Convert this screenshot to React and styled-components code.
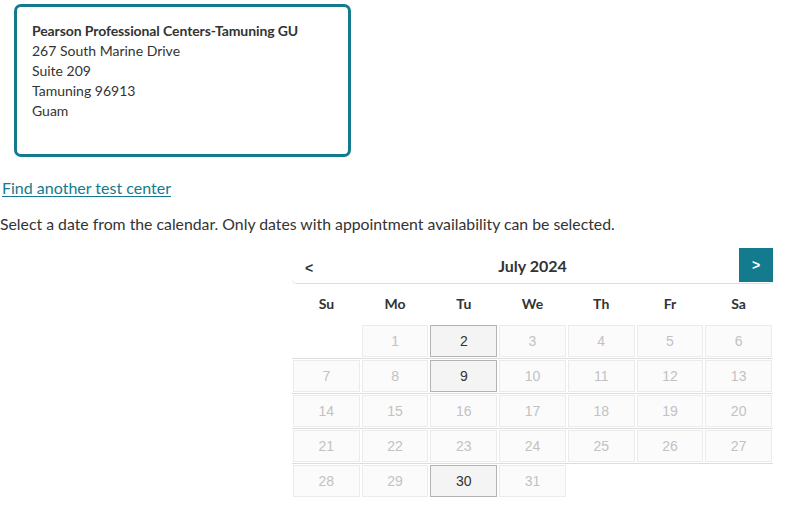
import React from 'react'
import styled, { createGlobalStyle } from 'styled-components'

const GlobalStyle = createGlobalStyle`
  body {
    margin: 0;
    background: #fff;
    color: #333;
    font-family: Lato, "Open Sans", sans-serif;
  }
`

const Page = styled.div`
  display: flex;
  flex-direction: column;
  align-items: flex-start;
  padding-top: 4px;
`

const CenterCard = styled.div`
  box-sizing: border-box;
  width: 337px;
  height: 153px;
  margin-left: 14px;
  padding: 14px 15px;
  border: 3px solid #137b8d;
  border-radius: 7px;
  font-size: 14px;
  line-height: 20px;
`

const CenterName = styled.div`
  font-weight: 700;
  letter-spacing: -0.1px;
`

const FindLink = styled.a`
  margin: 21px 0 0 2px;
  font-size: 16px;
  line-height: 20px;
  color: #137b8d;
  text-decoration: underline;
  text-underline-offset: 2px;
  cursor: pointer;
`

const Hint = styled.p`
  margin: 16px 0 0;
  font-size: 15.8px;
  line-height: 20px;
`

const Calendar = styled.div`
  width: 481px;
  margin: 14px 0 0 292px;
`

const Header = styled.div`
  display: flex;
  align-items: center;
  justify-content: space-between;
  height: 35px;
  border-bottom: 1px solid #ddd;
  border-radius: 0 0 5px 5px;
`

const NavButton = styled.button`
  width: 34px;
  height: 34px;
  padding: 0;
  border: none;
  background: ${p => (p.$active ? '#137b8d' : 'transparent')};
  color: ${p => (p.$active ? '#fff' : '#333')};
  font-family: "Liberation Sans", Arial, sans-serif;
  font-size: 14px;
  font-weight: 700;
  align-self: flex-start;
  margin-top: ${p => (p.$active ? '0' : '3px')};
  cursor: pointer;
`

const Month = styled.div`
  font-size: 16px;
  font-weight: 700;
`

const Week = styled.div`
  display: grid;
  grid-template-columns: repeat(7, 1fr);
  column-gap: 2px;
  padding: 1px;
  border-bottom: 1px solid #ddd;

  &:last-child {
    border-bottom: none;
  }
`

const DayNames = styled(Week)`
  height: 40px;
  box-sizing: border-box;
  padding: 0 1px 2px;
  align-items: center;
  border-bottom: none;
`

const DayName = styled.div`
  text-align: center;
  font-size: 14px;
  font-weight: 700;
`

const Day = styled.div`
  box-sizing: border-box;
  height: 32px;
  padding-bottom: 1px;
  display: flex;
  align-items: center;
  justify-content: center;
  font-family: "Liberation Sans", Arial, sans-serif;
  font-size: 14px;
  border: 1px solid ${p => (p.$open ? '#b3b3b3' : '#ebebeb')};
  background: ${p => (p.$open ? '#f4f4f4' : '#fbfbfb')};
  color: ${p => (p.$open ? '#333' : '#c2c2c2')};
  cursor: ${p => (p.$open ? 'pointer' : 'default')};
`

const Blank = styled.div`
  height: 32px;
`

const names = ['Su', 'Mo', 'Tu', 'We', 'Th', 'Fr', 'Sa']
const open = [2, 9, 30]

// July 2024 starts on a Monday
const weeks = []
for (let w = 0; w < 5; w++) {
  const row = []
  for (let d = 0; d < 7; d++) {
    const n = w * 7 + d
    row.push(n >= 1 && n <= 31 ? n : null)
  }
  weeks.push(row)
}

export default function App() {
  return (
    <Page>
      <GlobalStyle />
      <CenterCard>
        <CenterName>Pearson Professional Centers-Tamuning GU</CenterName>
        <div>267 South Marine Drive</div>
        <div>Suite 209</div>
        <div>Tamuning 96913</div>
        <div>Guam</div>
      </CenterCard>
      <FindLink>Find another test center</FindLink>
      <Hint>Select a date from the calendar. Only dates with appointment availability can be selected.</Hint>
      <Calendar>
        <Header>
          <NavButton>&lt;</NavButton>
          <Month>July 2024</Month>
          <NavButton $active>&gt;</NavButton>
        </Header>
        <DayNames>
          {names.map(n => (
            <DayName key={n}>{n}</DayName>
          ))}
        </DayNames>
        {weeks.map((row, i) => (
          <Week key={i}>
            {row.map((n, j) =>
              n ? (
                <Day key={j} $open={open.includes(n)}>{n}</Day>
              ) : (
                <Blank key={j} />
              )
            )}
          </Week>
        ))}
      </Calendar>
    </Page>
  )
}
